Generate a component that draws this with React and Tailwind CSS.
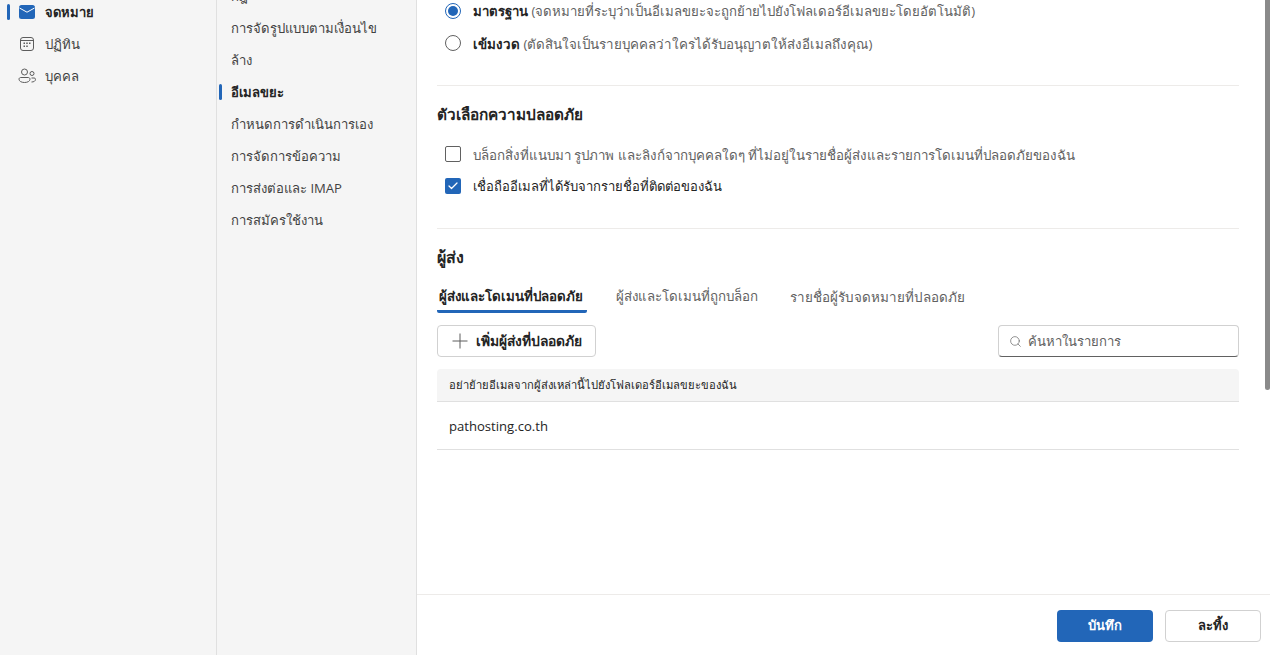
import { Search, Check } from 'lucide-react'

const FONT = "font-['Open_Sans','Noto_Sans',sans-serif]"

const SUB_ITEMS = [
  { label: 'กฎ' },
  { label: 'การจัดรูปแบบตามเงื่อนไข' },
  { label: 'ล้าง' },
  { label: 'อีเมลขยะ', active: true },
  { label: 'กำหนดการดำเนินการเอง' },
  { label: 'การจัดการข้อความ' },
  { label: 'การส่งต่อและ IMAP' },
  { label: 'การสมัครใช้งาน' },
]

function CalendarIcon() {
  return (
    <svg width="16" height="16" viewBox="0 0 16 16" fill="none" stroke="#5c5c5c" strokeWidth="1">
      <rect x="1.5" y="1.5" width="13" height="13" rx="2.5" />
      <path d="M1.5 4.5h13" />
      <g fill="#5c5c5c" stroke="none">
        <rect x="4.5" y="6.5" width="1.5" height="1.5" />
        <rect x="7.25" y="6.5" width="1.5" height="1.5" />
        <rect x="10" y="6.5" width="1.5" height="1.5" />
        <rect x="4.5" y="9.5" width="1.5" height="1.5" />
        <rect x="7.25" y="9.5" width="1.5" height="1.5" />
      </g>
    </svg>
  )
}

function PeopleIcon() {
  return (
    <svg width="18" height="16" viewBox="0 0 18 16" fill="none" stroke="#5c5c5c" strokeWidth="1">
      <circle cx="6.5" cy="4" r="3" />
      <path d="M1 11.2c0-1 .8-1.7 1.7-1.7h7.6c.9 0 1.7.7 1.7 1.7 0 2-2.4 3.3-5.5 3.3S1 13.2 1 11.2Z" />
      <circle cx="14" cy="5.5" r="2" />
      <path d="M13.5 14c2.3 0 4-.9 4-2.7 0-.8-.6-1.3-1.3-1.3h-2.7" />
    </svg>
  )
}

function NavRow({ icon, label, active }) {
  return (
    <div className="relative flex items-center h-8 pl-[18px]">
      {active && <span className="absolute left-[7px] top-2 w-[3px] h-4 rounded-sm bg-[#2266b8]" />}
      <span className="w-[18px] flex justify-center">{icon}</span>
      <span className={`ml-[9px] pt-[2px] ${active ? 'text-[13px] font-bold text-[#242424]' : 'text-[13.2px] text-[#424242]'}`}>{label}</span>
    </div>
  )
}

function Radio({ checked, label, note, size }) {
  return (
    <div className="flex items-center h-8 pl-2">
      <span className={`w-4 h-4 rounded-full border flex items-center justify-center ${checked ? 'border-[#2266b8]' : 'border-[#616161]'}`}>
        {checked && <span className="w-2.5 h-2.5 rounded-full bg-[#2266b8]" />}
      </span>
      <span className={`ml-3 pt-[2px] text-[#616161] ${size}`}>
        <b className="text-[#242424]">{label}</b> {note}
      </span>
    </div>
  )
}

export default function App() {
  return (
    <div className={`flex w-[1270px] h-[655px] overflow-hidden bg-white ${FONT}`}>
      <aside className="w-[217px] shrink-0 bg-[#f5f5f5] border-r border-[#e0e0e0] -mt-1 pb-1">
        <NavRow
          active
          label="จดหมาย"
          icon={
            <svg width="16" height="14" viewBox="0 0 16 14">
              <rect width="16" height="14" rx="2.5" fill="#2266b8" />
              <path d="M0.5 3l7.5 4.2L15.5 3" fill="none" stroke="#fff" strokeWidth="1" />
            </svg>
          }
        />
        <NavRow label="ปฏิทิน" icon={<CalendarIcon />} />
        <NavRow label="บุคคล" icon={<PeopleIcon />} />
      </aside>

      <nav className="w-[200px] shrink-0 bg-[#f5f5f5] border-r border-[#e0e0e0] -mt-5 pb-5">
        {SUB_ITEMS.map((item) => (
          <div key={item.label} className="relative flex items-center h-8 pl-[14px]">
            {item.active && <span className="absolute left-[2px] top-2 w-[3px] h-4 rounded-sm bg-[#2266b8]" />}
            <span className={`pt-[2px] text-[13.1px] ${item.active ? 'font-bold text-[#242424]' : 'text-[#424242]'}`}>{item.label}</span>
          </div>
        ))}
      </nav>

      <main className="relative flex-1 flex flex-col min-w-0">
        <span className="absolute right-0 top-0 w-[5px] h-[390px] rounded-b-sm bg-[#8a8a8a]" />
        <div className="flex-1 min-h-0 overflow-hidden px-5 pr-[31px]">
          <div className="-mt-[5px]">
            <Radio checked size="text-[13.2px]" label="มาตรฐาน" note="(จดหมายที่ระบุว่าเป็นอีเมลขยะจะถูกย้ายไปยังโฟลเดอร์อีเมลขยะโดยอัตโนมัติ)" />
            <Radio size="text-[13.37px]" label="เข้มงวด" note="(ตัดสินใจเป็นรายบุคคลว่าใครได้รับอนุญาตให้ส่งอีเมลถึงคุณ)" />
          </div>

          <div className="mt-[26px] border-t border-[#edebe9] pt-[16px]">
            <h2 className="h-[24px] leading-[24px] text-[15.3px] font-bold text-[#242424]">ตัวเลือกความปลอดภัย</h2>
            <div className="mt-[12px]">
              <div className="flex items-center h-8 pl-2">
                <span className="w-4 h-4 rounded-[2px] border border-[#616161]" />
                <span className="ml-3 pt-[2px] text-[13.35px] text-[#616161]">บล็อกสิ่งที่แนบมา รูปภาพ และลิงก์จากบุคคลใดๆ ที่ไม่อยู่ในรายชื่อผู้ส่งและรายการโดเมนที่ปลอดภัยของฉัน</span>
              </div>
              <div className="flex items-center h-8 pl-2">
                <span className="w-4 h-4 rounded-[2px] bg-[#2266b8] flex items-center justify-center">
                  <Check size={12} color="#fff" strokeWidth={2.5} />
                </span>
                <span className="ml-3 pt-[2px] text-[13.05px] text-[#242424]">เชื่อถืออีเมลที่ได้รับจากรายชื่อที่ติดต่อของฉัน</span>
              </div>
            </div>
          </div>

          <div className="mt-[26px] border-t border-[#edebe9] pt-[16px]">
            <h2 className="h-[24px] leading-[24px] text-base font-bold text-[#242424]">ผู้ส่ง</h2>
            <div className="mt-[12px] flex text-[13.3px] text-[#616161]">
              <div className="w-[150px] pl-[2px] h-[32px] flex items-center pt-[3px] text-[13.3px] font-bold text-[#242424] border-b-[3px] border-[#2266b8] rounded-b-[2px]">ผู้ส่งและโดเมนที่ปลอดภัย</div>
              <div className="ml-[29px] h-[32px] flex items-center">ผู้ส่งและโดเมนที่ถูกบล็อก</div>
              <div className="ml-[32px] h-[32px] flex items-center text-[13.45px]">รายชื่อผู้รับจดหมายที่ปลอดภัย</div>
            </div>
            <div className="mt-[12px] flex items-center justify-between">
              <button className="h-8 w-[159px] flex items-center justify-center gap-[8px] border border-[#d1d1d1] rounded bg-white text-[13.85px] font-bold text-[#242424]">
                <svg width="16" height="16" viewBox="0 0 16 16" stroke="#5c5c5c" strokeWidth="1">
                  <path d="M8 .5v15M.5 8h15" />
                </svg>
                เพิ่มผู้ส่งที่ปลอดภัย
              </button>
              <div className="h-8 w-[241px] flex items-center gap-[6px] pl-[10px] border border-[#d1d1d1] border-b-[#616161] rounded bg-white text-[13.1px] text-[#616161]">
                <Search size={13} color="#616161" strokeWidth={1.25} />
                <span className="pt-[2px]">ค้นหาในรายการ</span>
              </div>
            </div>
            <div className="mt-[12px] h-[33px] px-3 flex items-center bg-[#f5f5f5] border-b border-[#e0e0e0] rounded-t text-[11.2px] text-[#242424]">
              อย่าย้ายอีเมลจากผู้ส่งเหล่านี้ไปยังโฟลเดอร์อีเมลขยะของฉัน
            </div>
            <div className="h-[48px] px-3 pt-[2px] flex items-center border-b border-[#e0e0e0] text-[13.1px] text-[#242424]">pathosting.co.th</div>
          </div>
        </div>

        <footer className="h-[61px] shrink-0 border-t border-[#edebe9] flex items-center justify-end gap-3 pr-[9px] pt-[1px]">
          <button className="w-[96px] h-8 rounded bg-[#2266b8] text-[13px] font-bold text-white">บันทึก</button>
          <button className="w-[96px] h-8 rounded border border-[#d1d1d1] bg-white text-[13px] font-bold text-[#242424]">ละทิ้ง</button>
        </footer>
      </main>
    </div>
  )
}
